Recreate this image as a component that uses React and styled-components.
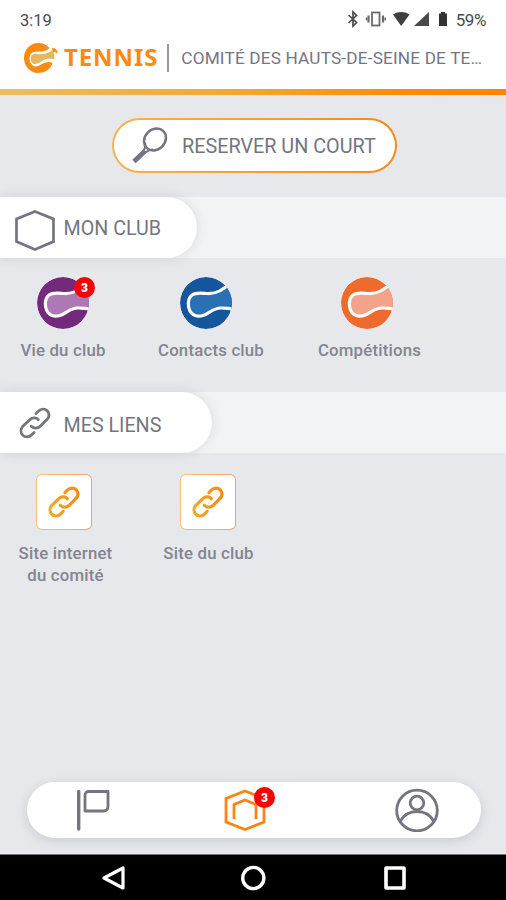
import React from 'react';
import styled, { createGlobalStyle } from 'styled-components';

const GlobalStyle = createGlobalStyle`
  body {
    margin: 0;
    background: #e6e8ec;
    font-family: Roboto, 'Liberation Sans', sans-serif;
  }
`;

const Screen = styled.div`
  width: 506px;
  height: 900px;
  display: flex;
  flex-direction: column;
  overflow: hidden;
  background: #e6e8ec;
  color: #74757f;
`;

// Status bar
const StatusBar = styled.div`
  display: flex;
  align-items: center;
  justify-content: space-between;
  height: 38px;
  padding: 2px 20px 0 20px;
  box-sizing: border-box;
  background: #fff;
  color: #4a4a4c;
  font-size: 16.5px;
`;

const StatusIcons = styled.div`
  display: flex;
  align-items: center;

  svg {
    display: block;
    margin-top: -3px;
  }
`;

const Percent = styled.span`
  margin-left: 7px;
  font-size: 17px;
  letter-spacing: -0.4px;
`;

// Header
const Header = styled.header`
  display: flex;
  align-items: center;
  height: 51px;
  padding: 0 0 12px 23px;
  box-sizing: border-box;
  background: #fff;
`;

const Brand = styled.span`
  margin-left: 5px;
  margin-top: -2px;
  color: #f98c10;
  font-family: 'Noto Sans', sans-serif;
  font-size: 24px;
  font-weight: 700;
  line-height: 30px;
  letter-spacing: 0.9px;
`;

const Separator = styled.span`
  width: 2px;
  height: 28px;
  margin: 0 12px 0 9px;
  background: #96969e;
`;

const Committee = styled.span`
  font-size: 17.2px;
  letter-spacing: 0.18px;
  white-space: nowrap;
`;

const Accent = styled.div`
  height: 6px;
  background: linear-gradient(90deg, #ebbd60 0%, #f2a62e 50%, #fb8a08 80%, #ff8500 100%);
`;

const BookingRow = styled.div`
  display: flex;
  justify-content: center;
  padding: 23px 0 24px 3px;
`;

const BookingButton = styled.button`
  display: flex;
  align-items: center;
  width: 285px;
  height: 55px;
  padding: 0 0 0 18px;
  border: 2px solid transparent;
  border-radius: 28px;
  background:
    linear-gradient(#fff, #fff) padding-box,
    linear-gradient(90deg, #f5b550, #f58a1c) border-box;
  color: #74757f;
  font-family: inherit;
  font-size: 19.8px;
  white-space: nowrap;

  span {
    margin-left: 13px;
    padding-top: 2px;
  }
`;

// Sections
const SectionBar = styled.div`
  height: 61px;
  background: #f2f3f5;
`;

const SectionTab = styled.div`
  display: flex;
  align-items: center;
  width: ${(props) => props.$width}px;
  height: 61px;
  padding-left: 14px;
  box-sizing: border-box;
  border-radius: 0 31px 31px 0;
  background: #fff;
  box-shadow: 0 0 12px rgba(60, 64, 80, 0.13);
`;

const SectionIcon = styled.div`
  display: flex;
  justify-content: center;
  width: 42px;
  margin-top: ${(props) => props.$top || 0}px;
`;

const SectionTitle = styled.span`
  margin-left: 7.5px;
  padding-top: ${(props) => props.$top || 0}px;
  font-size: 19.7px;
  white-space: nowrap;
`;

const ItemGrid = styled.div`
  display: grid;
  grid-template-columns: ${(props) => props.$columns};
  height: ${(props) => props.$height}px;
  box-sizing: border-box;
  padding-top: ${(props) => props.$top}px;
`;

const Item = styled.div`
  display: flex;
  flex-direction: column;
  align-items: center;
`;

const ItemIcon = styled.div`
  position: relative;
  display: flex;

  svg {
    display: block;
  }
`;

const ItemLabel = styled.span`
  margin-top: ${(props) => props.$gap}px;
  padding-left: ${(props) => props.$shift || 0}px;
  color: #84858e;
  font-size: 16.8px;
  font-weight: 500;
  line-height: 22px;
  letter-spacing: 0.2px;
  text-align: center;
  white-space: pre-line;
`;

const Badge = styled.span`
  position: absolute;
  top: ${(props) => props.$top}px;
  right: ${(props) => props.$right}px;
  width: 21px;
  height: 21px;
  border-radius: 50%;
  background: #fb0007;
  color: #fff;
  font-size: 12px;
  font-weight: 900;
  line-height: 22px;
  text-align: center;
`;

const LinkTile = styled.div`
  display: flex;
  align-items: center;
  justify-content: center;
  width: 56px;
  height: 56px;
  padding-bottom: 1px;
  box-sizing: border-box;
  border: 1.5px solid transparent;
  border-radius: 6px;
  background:
    linear-gradient(#fff, #fff) padding-box,
    linear-gradient(90deg, #f8c070, #f2a070) border-box;
`;

// Bottom navigation
const TabBar = styled.nav`
  display: flex;
  align-items: center;
  justify-content: space-between;
  width: 454px;
  height: 56px;
  padding: 0 42px 0 49px;
  box-sizing: border-box;
  margin: auto 0 16px 27px;
  border-radius: 28px;
  background: #fff;
  box-shadow: 0 3px 12px rgba(60, 64, 80, 0.16);
`;

const TabItem = styled.div`
  position: relative;
  margin-right: ${(props) => props.$space || 0}px;

  svg {
    display: block;
  }
`;

const SystemBar = styled.div`
  display: flex;
  align-items: center;
  justify-content: space-between;
  height: 46px;
  padding: 0 98px 0 100px;
  box-sizing: border-box;
  border-top: 1px solid #77797c;
  background: #000;
`;

const TennisBall = ({ color, light }) => (
  <svg width="52" height="52" viewBox="0 0 52 52">
    <defs>
      <clipPath id={`ball-${color.slice(1)}`}>
        <circle cx="26" cy="26" r="26" />
      </clipPath>
    </defs>
    <g clipPath={`url(#ball-${color.slice(1)})`}>
      <circle cx="26" cy="26" r="26" fill={color} />
      <path
        d="M50 6C43 13.500 35 17 27 16.500C21 16 16 15 12 18C8 21 7.500 28 9.500 33C11.500 38 17 40.500 23 38.500C29 36.500 33 31 41 31C46 31 50 32 56 32L60 6Z"
        fill={light}
        stroke="#fff"
        strokeWidth="3.200"
      />
    </g>
  </svg>
);

const BrandBall = () => (
  <svg width="36" height="32" viewBox="0 0 36 32">
    <path
      d="M26.500 6C23 2 19 1 15 1C7 1 1 8 1 16C1 24 7 31 15 31C22 31 28 27 29.500 21C26 19 23 20 19 22C15 25 10 26 8 21C6 16 6 11 11 10C15 9 22 11 26.500 6Z"
      fill="#f98c10"
    />
    <path
      d="M29 8C25 12 19 13 14 12C9 11 7 15 8 19C10 24 15 22 19 19C23 16 27 17 31 17C32 14 31 11 29 8Z"
      fill="#e5b85f"
      stroke="#fff"
      strokeWidth="2.400"
      paintOrder="stroke"
    />
    <path d="M29.500 6.500C32 6 34 8 34 11C33 9.500 31.500 9.500 30.500 10Z" fill="#f98c10" stroke="#f98c10" />
  </svg>
);

const Racket = () => (
  <svg width="37" height="37" viewBox="0 0 37 37" fill="none" stroke="#74757f">
    <ellipse cx="23" cy="12.500" rx="11.800" ry="10" transform="rotate(-45 23 12.500)" strokeWidth="2.500" />
    <path d="M13 15.500C14 19 13.500 21 11.500 23.500L13.500 25.500C16 23.500 18 22 21 22.500" strokeWidth="2" />
    <path d="M12.500 24.500L2 34.500" strokeWidth="4.800" />
  </svg>
);

const Hexagon = () => (
  <svg width="42" height="42" viewBox="0 0 42 42" fill="none">
    <path d="M21 2.500L39.500 10V32.500L21 40.500L2.500 32.500V10Z" stroke="#74757f" strokeWidth="2.700" />
  </svg>
);

const Chain = ({ stroke, width = 2.8 }) => (
  <svg width="32" height="32" viewBox="0 0 34 34" fill="none">
    <defs>
      <linearGradient id="chain-orange" gradientUnits="userSpaceOnUse" x1="0" y1="0" x2="34" y2="0">
        <stop offset="0" stopColor="#f6a92e" />
        <stop offset="1" stopColor="#f58a0c" />
      </linearGradient>
    </defs>
    <g stroke={stroke} strokeWidth={width} strokeLinecap="round">
      <path d="M18 7L20.500 4.500C23.500 1.500 27.500 1.500 30 4C32.500 6.500 32.500 10.500 30 13L22.500 20.500C20 23 15.500 23 13 20.500" />
      <path d="M16 27L13.500 29.500C10.500 32.500 6.500 32.500 4 30C1.500 27.500 1.500 23.500 4 20.500L11.500 13.500C14 11 18.500 11 20.500 13.500" />
    </g>
  </svg>
);

const Flag = () => (
  <svg width="34" height="42" viewBox="0 0 34 42" fill="none" stroke="#74757f" strokeLinecap="round">
    <path d="M2.700 2.500V40" strokeWidth="3.400" />
    <path d="M13 2.500H32V17C32 20 30.500 22 27.500 22H9V6.500C9 4 10.500 2.500 13 2.500Z" strokeWidth="2.800" strokeLinejoin="round" />
  </svg>
);

const Club = () => (
  <svg width="42" height="42" viewBox="0 0 42 42" fill="none" stroke="#f98510" strokeWidth="2.800">
    <path d="M21 2L40 9.500V33L21 40.500L2 33V9.500Z" />
    <path d="M10 30V15.500L21 11L32 15.500V30" />
  </svg>
);

const Profile = () => (
  <svg width="44" height="44" viewBox="0 0 44 44" fill="none" stroke="#74757f" strokeWidth="2.800">
    <circle cx="22" cy="22.500" r="20.300" />
    <circle cx="22" cy="15" r="6.800" />
    <path d="M5 33.500C9 26.500 15 23.500 22 23.500C29 23.500 35 26.500 39 33.500" />
  </svg>
);

const SystemIcons = () => (
  <StatusIcons>
    <svg width="110" height="18" viewBox="0 0 110 18">
      <path d="M21 5L29 12.500L25.500 16V2L29 5.500L21 13" transform="translate(-11.500 0)" fill="none" stroke="#4a4a4c" strokeWidth="1.700" />
      <g stroke="#6a6a6c" fill="none">
        <rect x="33" y="2.500" width="7.500" height="13" strokeWidth="1.800" />
        <path d="M29.500 5.500V12.500M44 5.500V12.500" strokeWidth="2.200" />
        <path d="M27.500 7.500V10.500M46.200 7.500V10.500" strokeWidth="1.500" />
      </g>
      <path d="M54 4.500C59 1.200 65.500 1.200 70.500 4.500L62.200 16Z" fill="#3f3f41" />
      <path d="M75 16L90 2V16Z" fill="#4a4a4c" />
      <path d="M100 3.500H102V2H106V3.500H108V16H100Z" fill="#333" />
    </svg>
    <Percent>59%</Percent>
  </StatusIcons>
);

const clubItems = [
  { label: 'Vie du club', color: '#742a7c', light: '#ad78b3', badge: 3, shift: 0 },
  { label: 'Contacts club', color: '#15569c', light: '#2a70b4', shift: 10 },
  { label: 'Compétitions', color: '#ee6a2d', light: '#f3a389', shift: 5 },
];

const linkItems = [
  { label: 'Site internet\ndu comité', shift: 4 },
  { label: 'Site du club', shift: 1 },
];

const App = () => (
  <>
    <GlobalStyle />
    <Screen>
      <StatusBar>
        <span>3:19</span>
        <SystemIcons />
      </StatusBar>
      <Header>
        <BrandBall />
        <Brand>TENNIS</Brand>
        <Separator />
        <Committee>COMITÉ DES HAUTS-DE-SEINE DE TE…</Committee>
      </Header>
      <Accent />

      <BookingRow>
        <BookingButton type="button">
          <Racket />
          <span>RESERVER UN COURT</span>
        </BookingButton>
      </BookingRow>

      <SectionBar>
        <SectionTab $width={197}>
          <SectionIcon $top={4}>
            <Hexagon />
          </SectionIcon>
          <SectionTitle $top={1}>MON CLUB</SectionTitle>
        </SectionTab>
      </SectionBar>
      <ItemGrid $height={134} $top={19} $columns="126px 160px 162px">
        {clubItems.map((item) => (
          <Item key={item.label}>
            <ItemIcon>
              <TennisBall color={item.color} light={item.light} />
              {item.badge && <Badge $top={0} $right={-6}>{item.badge}</Badge>}
            </ItemIcon>
            <ItemLabel $gap={10} $shift={item.shift}>{item.label}</ItemLabel>
          </Item>
        ))}
      </ItemGrid>

      <SectionBar>
        <SectionTab $width={212}>
          <SectionIcon>
            <Chain stroke="#74757f" width={3} />
          </SectionIcon>
          <SectionTitle $top={5}>MES LIENS</SectionTitle>
        </SectionTab>
      </SectionBar>
      <ItemGrid $height={140} $top={21} $columns="127px 162px 160px">
        {linkItems.map((item) => (
          <Item key={item.label}>
            <LinkTile>
              <Chain stroke="url(#chain-orange)" width={3.4} />
            </LinkTile>
            <ItemLabel $gap={12} $shift={item.shift}>{item.label}</ItemLabel>
          </Item>
        ))}
      </ItemGrid>

      <TabBar>
        <TabItem>
          <Flag />
        </TabItem>
        <TabItem $space={15}>
          <Club />
          <Badge $top={-2} $right={-9}>3</Badge>
        </TabItem>
        <TabItem>
          <Profile />
        </TabItem>
      </TabBar>
      <SystemBar>
        <svg width="26" height="26" viewBox="0 0 26 26" fill="none" stroke="#fff" strokeWidth="3.200" strokeLinejoin="round">
          <path d="M23 3V23L4 13Z" />
        </svg>
        <svg width="26" height="26" viewBox="0 0 26 26" fill="none" stroke="#fff" strokeWidth="3.400">
          <circle cx="12.300" cy="13" r="10.600" />
        </svg>
        <svg width="26" height="26" viewBox="0 0 26 26" fill="none" stroke="#fff" strokeWidth="3.600" strokeLinejoin="round">
          <rect x="4" y="3" width="18" height="20" />
        </svg>
      </SystemBar>
    </Screen>
  </>
);

export default App;
